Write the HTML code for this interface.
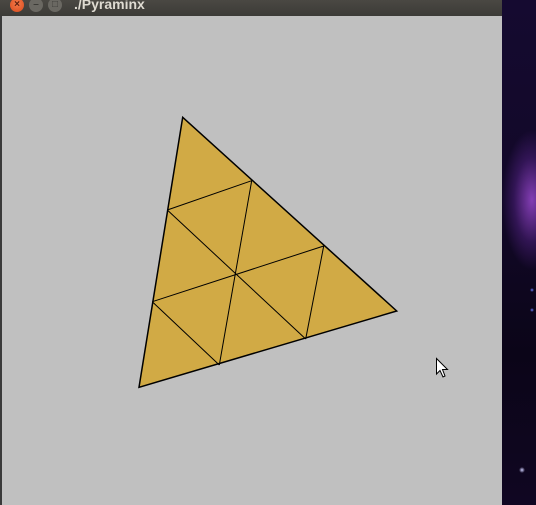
<!DOCTYPE html>
<html><head><style>
html,body{margin:0;padding:0;width:536px;height:505px;overflow:hidden;background:#0b0618;}
#bg{position:absolute;left:502px;top:0;width:34px;height:505px;
background:
radial-gradient(ellipse 30px 70px at 30px 200px, rgba(160,75,215,0.8), rgba(110,45,170,0.35) 60%, transparent 100%),
radial-gradient(circle 4px at 42px 250px, #a8c8ff, transparent),
radial-gradient(circle 2px at 30px 290px, #6c80ff, transparent),
radial-gradient(circle 2px at 30px 310px, #6c80ff, transparent),
radial-gradient(circle 3px at 20px 470px, #d0d0ff, transparent),
linear-gradient(#150a30,#120828 40%,#0b0518 70%,#100622);}
#win{position:absolute;left:0;top:0;width:502px;height:505px;background:#c0c0c0;}
#title{position:absolute;left:0;top:0;width:502px;height:16px;background:linear-gradient(#4a4843,#3c3b37);}
.b{position:absolute;top:-2px;width:14px;height:14px;border-radius:50%;color:#3c3b37;font:bold 10px "Liberation Sans",sans-serif;text-align:center;line-height:14px;}
#t{position:absolute;left:74px;top:-4px;font:bold 14px "Liberation Sans",sans-serif;color:#dfdbd2;}
#lb{position:absolute;left:0;top:16px;width:2px;height:489px;background:#3a3a3a;}
</style></head><body>
<div id="bg"></div>
<div id="win">
<div id="title">
<div class="b" style="left:10px;background:radial-gradient(circle at 50% 40%,#f47a4a,#d84a1c);color:#5a2010">×</div>
<div class="b" style="left:29px;background:#6a6862;">–</div>
<div class="b" style="left:48px;background:#6a6862;">□</div>
<div id="t">./Pyraminx</div>
</div>
<div id="lb"></div>
<svg width="502" height="505" style="position:absolute;left:0;top:0">
<polygon points="182.7,117.3 396.7,311 139,387.3" fill="#d1aa45" stroke="#000" stroke-width="1.5"/>
<g stroke="#000" stroke-width="1" fill="none">
<line x1="167.3" y1="210" x2="251.7" y2="180.7"/>
<line x1="152.3" y1="301.7" x2="323.7" y2="246"/>
<line x1="251.7" y1="180.7" x2="219.3" y2="365"/>
<line x1="323.7" y1="246" x2="305.7" y2="339"/>
<line x1="167.3" y1="210" x2="305.7" y2="339"/>
<line x1="152.3" y1="301.7" x2="219.3" y2="365"/>
</g>
<path d="M436.5,358.5 L436.5,374 L440,370.5 L443,377 L445,376 L442.5,369.5 L447.5,369.5 Z" fill="#fff" stroke="#000" stroke-width="1"/>
</svg>
</div>
</body></html>
